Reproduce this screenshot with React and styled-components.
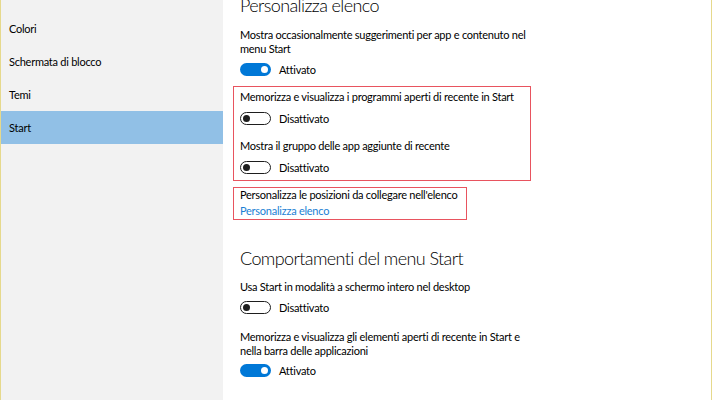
import styled, { createGlobalStyle } from 'styled-components'

const GlobalStyle = createGlobalStyle`
	html, body {
		margin: 0;
		padding: 0;
		background: #ffffff;
	}
	body {
		font-family: Lato, 'Noto Sans', sans-serif;
		color: #000;
	}
`

const Window = styled.div`
	width: 712px;
	height: 400px;
	box-sizing: border-box;
	border-left: 1px solid #e6d98c;
	border-right: 1px solid #e6d98c;
	display: flex;
	overflow: hidden;
	background: #fff;
`

const Sidebar = styled.nav`
	width: 222px;
	flex: none;
	background: #f2f2f2;
	padding-top: 12px;
	display: flex;
	flex-direction: column;
`

const NavItem = styled.div`
	height: 33px;
	display: flex;
	align-items: center;
	padding-left: 8px;
	font-size: 11px;
	letter-spacing: -0.25px;
	color: #000;
	background: ${p => (p.$active ? '#91c0e6' : 'transparent')};
`

const Content = styled.main`
	flex: 1;
	padding-left: 17px;
	display: flex;
	flex-direction: column;
	align-items: flex-start;
`

const Heading = styled.h2`
	margin: ${p => p.$first ? '-9px' : '24px'} 0 0 0;
	font-family: Lato, sans-serif;
	font-weight: 300;
	font-size: 18px;
	letter-spacing: -0.6px;
	line-height: 28px;
	color: #000;
`

const Label = styled.p`
	margin: ${p => p.$gap ?? 0}px 0 0 0;
	font-size: 11px;
	letter-spacing: -0.25px;
	line-height: 14px;
	max-width: 292px;
	color: #000;
`

const Row = styled.div`
	margin-top: ${p => p.$gap ?? 3}px;
	height: 20px;
	display: flex;
	align-items: center;
	gap: 8px;
	font-size: 11px;
	letter-spacing: -0.25px;
`

const Track = styled.span`
	box-sizing: border-box;
	width: 31px;
	height: 13px;
	border-radius: 7px;
	display: flex;
	align-items: center;
	padding: 0 2px;
	justify-content: ${p => (p.$on ? 'flex-end' : 'flex-start')};
	background: ${p => (p.$on ? '#0078d7' : '#fff')};
	border: ${p => (p.$on ? 'none' : '1.5px solid #1e1e1e')};
	&::after {
		content: '';
		width: 7px;
		height: 7px;
		border-radius: 50%;
		margin: ${p => (p.$on ? '0 1px 0 0' : '0')};
		background: ${p => (p.$on ? '#fff' : '#1e1e1e')};
	}
`

const Highlight = styled.div`
	margin: ${p => p.$gap ?? 0}px 0 0 -7px;
	padding: ${p => p.$pad};
	width: ${p => p.$w}px;
	box-sizing: border-box;
	border: 1px solid #e8545f;
	display: flex;
	flex-direction: column;
	align-items: flex-start;
`

const Link = styled.a`
	margin-top: 3px;
	font-size: 11px;
	letter-spacing: -0.25px;
	line-height: 12px;
	color: #1a7fd4;
	text-decoration: none;
`

const Toggle = ({ on, gap }) => (
	<Row $gap={gap}>
		<Track $on={on} />
		<span>{on ? 'Attivato' : 'Disattivato'}</span>
	</Row>
)

const App = () => {
	const items = ['Colori', 'Schermata di blocco', 'Temi', 'Start']
	return (
		<>
			<GlobalStyle />
			<Window>
				<Sidebar>
					{items.map(item => (
						<NavItem key={item} $active={item === 'Start'}>
							{item}
						</NavItem>
					))}
				</Sidebar>
				<Content>
					<Heading $first>Personalizza elenco</Heading>
					<Label $gap={9}>
						Mostra occasionalmente suggerimenti per app e contenuto nel menu Start
					</Label>
					<Toggle on gap={3} />
					<Highlight $gap={7} $w={298} $pad='3px 0 3px 6px'>
						<Label>Memorizza e visualizza i programmi aperti di recente in Start</Label>
						<Toggle on={false} gap={4} />
						<Label $gap={11}>Mostra il gruppo delle app aggiunte di recente</Label>
						<Toggle on={false} gap={4} />
					</Highlight>
					<Highlight $gap={6} $w={234} $pad='0 0 2px 6px'>
						<Label>Personalizza le posizioni da collegare nell'elenco</Label>
						<Link href='#'>Personalizza elenco</Link>
					</Highlight>
					<Heading>Comportamenti del menu Start</Heading>
					<Label $gap={8}>Usa Start in modalità a schermo intero nel desktop</Label>
					<Toggle on={false} gap={3} />
					<Label $gap={13}>
						Memorizza e visualizza gli elementi aperti di recente in Start e nella barra delle applicazioni
					</Label>
					<Toggle on gap={2} />
				</Content>
			</Window>
		</>
	)
}

export default App
